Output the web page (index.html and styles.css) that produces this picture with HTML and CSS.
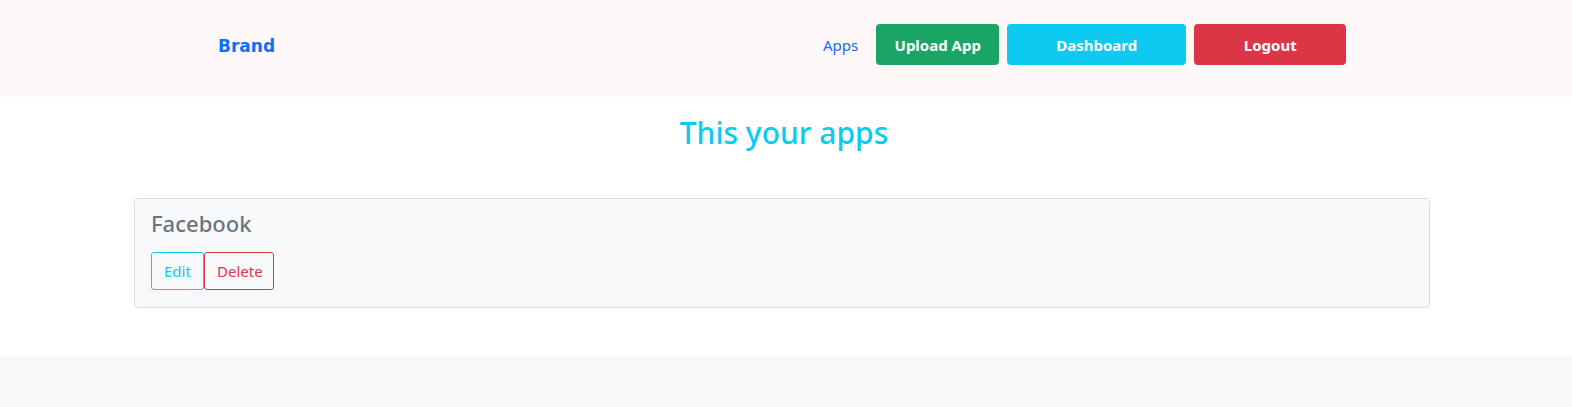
FILE: index.html
```html
<!DOCTYPE html>
<html lang="en">
<head>
<meta charset="utf-8">
<title>Apps</title>
<link rel="stylesheet" href="styles.css">
</head>
<body>
<header class="topbar">
  <a class="brand" href="#">Brand</a>
  <nav class="nav">
    <a class="nav-link" href="#">Apps</a>
    <a class="btn btn-success" href="#">Upload App</a>
    <a class="btn btn-info btn-wide" href="#">Dashboard</a>
    <a class="btn btn-danger btn-logout" href="#">Logout</a>
  </nav>
</header>
<main class="main">
  <h1 class="title">This your apps</h1>
  <div class="card">
    <h2 class="card-title">Facebook</h2>
    <div class="actions">
      <a class="obtn obtn-info" href="#">Edit</a>
      <a class="obtn obtn-danger" href="#">Delete</a>
    </div>
  </div>
</main>
<footer class="footer"></footer>
</body>
</html>
```
FILE: styles.css
```css
html, body { margin: 0; padding: 0; }
body {
  font-family: "Segoe UI", "Noto Sans", "Open Sans", sans-serif;
  background: #ffffff;
  color: #212529;
}
a { text-decoration: none; }

.topbar {
  height: 97px;
  background: #fff8f8;
  display: flex;
  align-items: center;
  padding-left: 218px;
  padding-bottom: 8px;
  box-sizing: border-box;
}
.brand {
  font-family: "DejaVu Sans", sans-serif;
  font-weight: bold;
  font-size: 17px;
  color: #0d6efd;
  width: 58px;
  margin-top: 2px;
}
.nav {
  margin-left: 547px;
  display: flex;
  align-items: center;
  gap: 8px;
}
.nav-link {
  color: #0d6efd;
  font-size: 15px;
  margin-right: 10px;
}
.btn {
  height: 41px;
  display: flex;
  align-items: center;
  justify-content: center;
  border-radius: 4px;
  color: #fff;
  font-weight: 700;
  font-size: 15px;
  box-sizing: border-box;
}
.btn-success { background: #1aa567; width: 123px; }
.btn-info { background: #0dcaf0; }
.btn-wide { width: 179px; }
.btn-danger { background: #dc3545; }
.btn-logout { width: 152px; }

.main {
  padding: 14px 142px 48px 134px;
}
.title {
  margin: 0;
  text-align: center;
  color: #0dcaf0;
  font-size: 30px;
  font-weight: 500;
  line-height: 44px;
  padding-left: 4px;
}
.card {
  margin-top: 43px;
  background: #f8f9fa;
  border: 1px solid #d9dcdf;
  border-radius: 4px;
  padding: 9px 16px 17px 16px;
}
.card-title {
  margin: 0;
  font-size: 22px;
  font-weight: 500;
  color: #6c757d;
  line-height: 30px;
}
.actions {
  display: flex;
  margin-top: 14px;
}
.obtn {
  height: 38px;
  display: flex;
  align-items: center;
  padding: 0 12px;
  border: 1px solid;
  border-radius: 3px;
  font-size: 15px;
  box-sizing: border-box;
  background: transparent;
}
.obtn-info { color: #0dcaf0; border-color: #0dcaf0; width: 53px; }
.obtn-danger { color: #dc3545; border-color: #dc3545; width: 70px; }

.footer {
  background: #f8f9fa;
  height: 60px;
}
```
